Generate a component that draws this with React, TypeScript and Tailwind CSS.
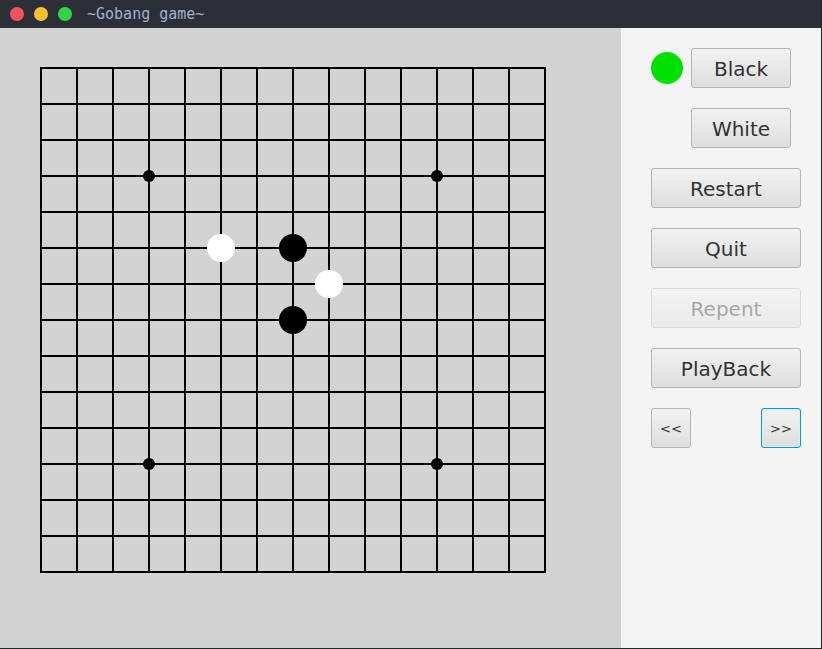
import React from "react";

const cells = Array.from({ length: 15 }, (_, i) => i);
const stars = [
  [3, 3],
  [11, 3],
  [3, 11],
  [11, 11],
];
const stones = [
  { x: 5, y: 5, c: "#ffffff" },
  { x: 7, y: 5, c: "#000000" },
  { x: 8, y: 6, c: "#ffffff" },
  { x: 7, y: 7, c: "#000000" },
];

function Board() {
  const ox = 41;
  const oy = 40;
  const s = 36;
  return (
    <svg width={621} height={620} className="block">
      {cells.map((i) => (
        <g key={i}>
          <line x1={ox} y1={oy + i * s} x2={ox + 14 * s} y2={oy + i * s} stroke="#000" strokeWidth={2} strokeLinecap="square" />
          <line x1={ox + i * s} y1={oy} x2={ox + i * s} y2={oy + 14 * s} stroke="#000" strokeWidth={2} strokeLinecap="square" />
        </g>
      ))}
      {stars.map(([x, y]) => (
        <circle key={`${x}-${y}`} cx={ox + x * s} cy={oy + y * s} r={6} fill="#000" />
      ))}
      {stones.map((st) => (
        <circle key={`${st.x}-${st.y}`} cx={ox + st.x * s} cy={oy + st.y * s} r={14} fill={st.c} />
      ))}
    </svg>
  );
}

function Btn({
  children,
  className = "",
  disabled = false,
  focused = false,
}: {
  children: React.ReactNode;
  className?: string;
  disabled?: boolean;
  focused?: boolean;
}) {
  return (
    <button
      className={
        "h-[40px] pt-[2px] rounded-[3px] border bg-gradient-to-b from-[#f2f2f2] to-[#dedede] text-[#333] flex items-center justify-center " +
        (focused ? "border-[#039ed3] shadow-[inset_0_0_0_1px_#d9eef7] " : "border-[#b5b5b5] ") +
        (disabled ? "opacity-40 " : "") +
        className
      }
    >
      {children}
    </button>
  );
}

export default function App() {
  return (
    <div
      className="w-[822px] h-[649px] flex flex-col bg-[#22252c] border-r border-b border-[#22252c] overflow-hidden"
      style={{ fontFamily: '"DejaVu Sans", sans-serif' }}
    >
      <div className="h-[28px] bg-[#2c2f38] flex items-center pl-[10px] shrink-0">
        <span className="w-[14px] h-[14px] rounded-full bg-[#f4515b]" />
        <span className="w-[14px] h-[14px] rounded-full bg-[#fcc02f] ml-[10px]" />
        <span className="w-[14px] h-[14px] rounded-full bg-[#2fd549] ml-[10px]" />
        <span
          className="ml-[15px] text-[15px] text-[#9eb2cc]"
          style={{ fontFamily: '"DejaVu Sans Mono", monospace' }}
        >
          ~Gobang game~
        </span>
      </div>
      <div className="flex flex-1">
        <div className="w-[621px] bg-[#d3d3d3]">
          <Board />
        </div>
        <div className="flex-1 bg-[#f4f4f4] pt-[20px] pl-[30px] pr-[20px] flex flex-col gap-[20px] text-[20px]">
          <div className="flex items-center">
            <span className="w-[32px] h-[32px] rounded-full bg-[#00e000]" />
            <Btn className="w-[100px] ml-[8px]">Black</Btn>
          </div>
          <div className="flex">
            <Btn className="w-[100px] ml-[40px]">White</Btn>
          </div>
          <Btn className="w-[150px]">Restart</Btn>
          <Btn className="w-[150px]">Quit</Btn>
          <Btn className="w-[150px]" disabled>
            Repent
          </Btn>
          <Btn className="w-[150px]">PlayBack</Btn>
          <div className="flex justify-between w-[150px] text-[13px]">
            <Btn className="w-[40px]">&lt;&lt;</Btn>
            <Btn className="w-[40px]" focused>
              &gt;&gt;
            </Btn>
          </div>
        </div>
      </div>
    </div>
  );
}
